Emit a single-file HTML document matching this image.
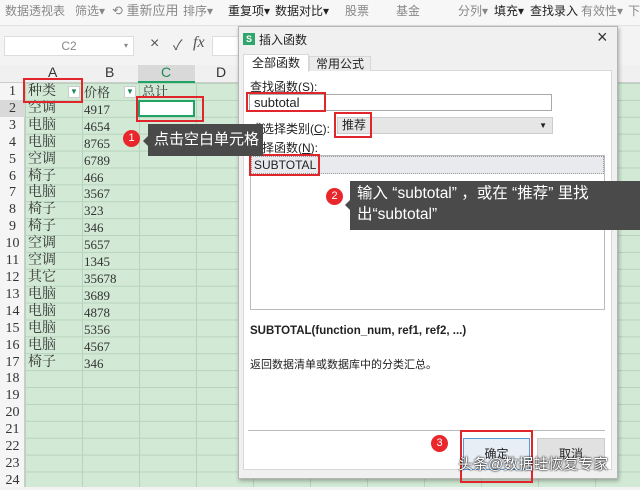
<!DOCTYPE html>
<html><head><meta charset="utf-8"><style>
*{margin:0;padding:0;box-sizing:border-box}
body{width:640px;height:487px;overflow:hidden;position:relative;background:#f3f3f3;font-family:"Liberation Sans","Noto Sans CJK SC",sans-serif;font-size:12px;color:#222}
.a{position:absolute}
.red{position:absolute;border:2px solid #e0262a}
.serif{font-family:"Liberation Serif","Noto Serif CJK SC",serif}
.badge{position:absolute;width:17px;height:17px;border-radius:50%;background:#e8262b;color:#fff;font-size:11px;text-align:center;line-height:17px}
.tip{position:absolute;background:#4a4a4a;color:#fff;font-size:14px}
</style></head><body>
<div class="a" style="left:0;top:0;width:640px;height:26px;background:#f7f7f7;border-bottom:1px solid #e2e2e2"></div>
<div class="a" style="left:5px;top:2px;font-size:12px;color:#888;white-space:nowrap">数据透视表</div>
<div class="a" style="left:75px;top:2px;color:#888">筛选▾</div>
<div class="a" style="left:112px;top:0px;color:#888;font-size:13px">⟲ 重新应用</div>
<div class="a" style="left:183px;top:2px;color:#888">排序▾</div>
<div class="a" style="left:228px;top:2px;color:#222">重复项▾</div>
<div class="a" style="left:275px;top:2px;color:#222">数据对比▾</div>
<div class="a" style="left:345px;top:2px;color:#888">股票</div>
<div class="a" style="left:396px;top:2px;color:#888">基金</div>
<div class="a" style="left:458px;top:2px;color:#888">分列▾</div>
<div class="a" style="left:494px;top:2px;color:#222">填充▾</div>
<div class="a" style="left:530px;top:2px;color:#222">查找录入</div>
<div class="a" style="left:581px;top:2px;color:#888">有效性▾</div>
<div class="a" style="left:628px;top:2px;color:#888">下</div>
<div class="a" style="left:0;top:27px;width:640px;height:38px;background:#f3f3f3"></div>
<div class="a" style="left:4px;top:36px;width:130px;height:20px;background:#fff;border:1px solid #ddd;color:#888;text-align:center;line-height:18px">C2<span style="position:absolute;right:5px;font-size:8px">▾</span></div>
<div class="a" style="left:150px;top:35px;font-size:16px;color:#555">×</div>
<div class="a" style="left:173px;top:35px;font-size:14px;color:#555">✓</div>
<div class="a serif" style="left:193px;top:34px;font-size:16px;font-style:italic;color:#555">fx</div>
<div class="a" style="left:212px;top:36px;width:30px;height:20px;background:#fff;border:1px solid #ddd"></div>
<div class="a" style="left:0;top:65px;width:640px;height:18px;background:#f0f0f0;border-bottom:1px solid #ccc"></div>
<div class="a" style="left:138px;top:65px;width:57px;height:18px;background:#d9d9d9;border-bottom:2px solid #21a366"></div>
<div class="a" style="left:48px;top:64px;font-size:14px;color:#333">A</div>
<div class="a" style="left:105px;top:64px;font-size:14px;color:#333">B</div>
<div class="a" style="left:161px;top:64px;font-size:14px;color:#1e8a55">C</div>
<div class="a" style="left:216px;top:64px;font-size:14px;color:#333">D</div>
<div class="a" style="left:0;top:83px;width:25px;height:404px;background:#f5f5f5;border-right:1px solid #ccc"></div>
<div class="a" style="left:0;top:100px;width:25px;height:17px;background:#d9d9d9"></div>
<div class="a" style="left:25px;top:83px;width:615px;height:404px;background-color:#d2ead5;
background-image:linear-gradient(#b8d3bd 1px,transparent 1px),linear-gradient(90deg,#b8d3bd 1px,transparent 1px);
background-size:100% 16.9px,57px 100%;background-position:0 0,0 0"></div>
<div class="a" style="left:138px;top:100px;width:57px;height:17px;background:#fff;border:2px solid #21a366"></div>
<div class="a serif" style="left:0;top:84px;width:25px;font-size:14px;line-height:16.9px;text-align:center;color:#333">1<br>2<br>3<br>4<br>5<br>6<br>7<br>8<br>9<br>10<br>11<br>12<br>13<br>14<br>15<br>16<br>17<br>18<br>19<br>20<br>21<br>22<br>23<br>24</div>
<div class="a serif" style="left:28px;top:84px;font-size:14px;line-height:16.9px;color:#333">种类<br>空调<br>电脑<br>电脑<br>空调<br>椅子<br>电脑<br>椅子<br>椅子<br>空调<br>空调<br>其它<br>电脑<br>电脑<br>电脑<br>电脑<br>椅子</div>
<div class="a serif" style="left:84px;top:85px;font-size:13px;line-height:16.9px;color:#333">价格<br>4917<br>4654<br>8765<br>6789<br>466<br>3567<br>323<br>346<br>5657<br>1345<br>35678<br>3689<br>4878<br>5356<br>4567<br>346</div>
<div class="a serif" style="left:142px;top:84px;font-size:13px;line-height:16.9px;color:#333">总计</div>
<div class="a" style="left:68px;top:86px;width:12px;height:12px;background:#fff;border:1px solid #ccc;color:#1e8a55;font-size:8px;text-align:center;line-height:10px">▼</div>
<div class="a" style="left:124px;top:86px;width:12px;height:12px;background:#fff;border:1px solid #ccc;color:#1e8a55;font-size:8px;text-align:center;line-height:10px">▼</div>
<div class="red" style="left:23px;top:78px;width:60px;height:25px"></div>
<div class="red" style="left:136px;top:96px;width:68px;height:26px"></div>
<!-- dialog -->
<div class="a" style="left:238px;top:26px;width:380px;height:453px;background:#f0f0f0;border:1px solid #b5b5b5;box-shadow:1px 2px 4px rgba(0,0,0,.3)"></div>
<div class="a" style="left:243px;top:33px;width:12px;height:12px;background:#2fa66b;color:#fff;font-size:9px;text-align:center;line-height:12px;font-weight:bold">S</div>
<div class="a" style="left:259px;top:31px;font-size:12px">插入函数</div>
<div class="a" style="left:597px;top:27px;font-size:18px;color:#333">×</div>
<div class="a" style="left:243px;top:70px;width:369px;height:400px;background:#fff;border:1px solid #d8d8d8"></div>
<div class="a" style="left:243px;top:54px;width:66px;height:18px;background:#fff;border:1px solid #d8d8d8;border-bottom:0;text-align:center;line-height:17px">全部函数</div>
<div class="a" style="left:309px;top:56px;width:62px;height:15px;background:#ebebeb;border:1px solid #d8d8d8;border-bottom:0;text-align:center;line-height:14px">常用公式</div>
<div class="a" style="left:250px;top:78px">查找函数(<u>S</u>):</div>
<div class="a" style="left:249px;top:94px;width:303px;height:17px;background:#fff;border:1px solid #aaa;padding-left:4px;font-size:13px;line-height:15px">subtotal</div>
<div class="red" style="left:246px;top:92px;width:80px;height:20px"></div>
<div class="a" style="left:250px;top:120px">或选择类别(<u>C</u>):</div>
<div class="a" style="left:337px;top:117px;width:216px;height:17px;background:#e6e6e6;border:1px solid #ccc;padding-left:4px;line-height:15px">推荐<span style="position:absolute;right:5px;font-size:8px">▼</span></div>
<div class="red" style="left:334px;top:112px;width:38px;height:26px"></div>
<div class="a" style="left:250px;top:139px">选择函数(<u>N</u>):</div>
<div class="a" style="left:250px;top:155px;width:355px;height:155px;background:#fff;border:1px solid #bbb"></div>
<div class="a" style="left:251px;top:156px;width:353px;height:18px;background:#e8eaee;border:1px dotted #999;padding-left:2px;line-height:16px">SUBTOTAL</div>
<div class="red" style="left:249px;top:154px;width:71px;height:22px"></div>
<div class="badge" style="left:326px;top:188px">2</div>
<div class="a" style="left:345px;top:200px;width:0;height:0;border:5px solid transparent;border-right-color:#4a4a4a;border-left:0"></div>
<div class="tip" style="left:350px;top:181px;width:290px;height:49px;padding:2px 0 0 7px;line-height:21px;font-size:15.5px">输入 “subtotal” ，或在 “推荐” 里找<br>出“subtotal”</div>
<div class="a" style="left:250px;top:325px;font-weight:bold;font-size:11.5px">SUBTOTAL(function_num, ref1, ref2, ...)</div>
<div class="a" style="left:250px;top:356px;font-size:11px">返回数据清单或数据库中的分类汇总。</div>
<div class="a" style="left:248px;top:430px;width:357px;height:1px;background:#bbb"></div>
<div class="a" style="left:463px;top:438px;width:67px;height:32px;background:#e8eef5;border:1px solid #5b9bd5;text-align:center;line-height:30px">确定</div>
<div class="a" style="left:537px;top:438px;width:68px;height:32px;background:#e1e1e1;border:1px solid #ccc;text-align:center;line-height:30px">取消</div>
<div class="red" style="left:460px;top:430px;width:73px;height:53px"></div>
<div class="badge" style="left:431px;top:435px">3</div>
<div class="a" style="left:458px;top:453px;font-size:15px;color:#fff;text-shadow:0 0 2px #000,0 0 1px #000">头条@数据蛙恢复专家</div>
<!-- tooltip 1 on top -->
<div class="badge" style="left:123px;top:130px">1</div>
<div class="tip" style="left:148px;top:124px;width:115px;height:32px;line-height:32px;padding-left:6px;font-size:15px">点击空白单元格</div>
<div class="a" style="left:143px;top:136px;width:0;height:0;border:5px solid transparent;border-right-color:#4a4a4a;border-left:0"></div>
</body></html>
